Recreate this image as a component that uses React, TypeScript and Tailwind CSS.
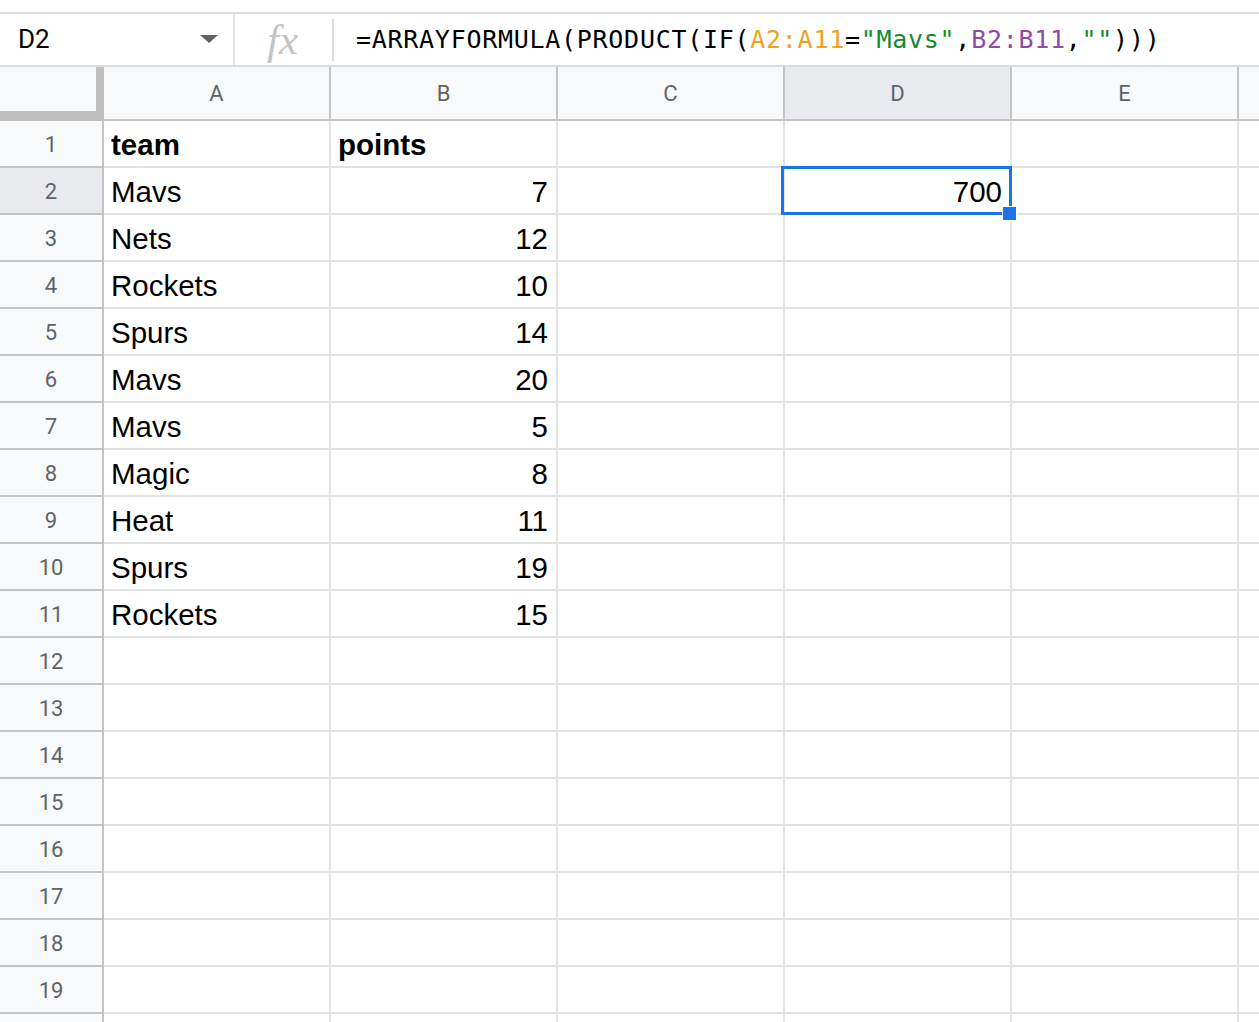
import React from "react";

const COLS = ["A", "B", "C", "D", "E", "F"];

const DATA: Record<number, [string, string]> = {
  1: ["team", "points"],
  2: ["Mavs", "7"],
  3: ["Nets", "12"],
  4: ["Rockets", "10"],
  5: ["Spurs", "14"],
  6: ["Mavs", "20"],
  7: ["Mavs", "5"],
  8: ["Magic", "8"],
  9: ["Heat", "11"],
  10: ["Spurs", "19"],
  11: ["Rockets", "15"],
};

const ROWS = Array.from({ length: 19 }, (_, i) => i + 1);

const cellFont = { fontFamily: '"Liberation Sans", Arial, sans-serif' };
const headFont = { fontFamily: 'Roboto, "Liberation Sans", sans-serif' };

function FormulaBar() {
  return (
    <div className="flex h-[55px] items-center border-y-2 border-[#dadce0] bg-white">
      <div className="flex h-full w-[233px] items-center justify-between pl-[18px] pr-[15px]">
        <span className="text-[26px] text-black" style={headFont}>D2</span>
        <svg width="18" height="9" viewBox="0 0 18 9">
          <path d="M0 0 L18 0 L9 8 Z" fill="#5f6368" />
        </svg>
      </div>
      <div className="h-full w-[2px] bg-[#e3e3e3]" />
      <div className="flex w-[97px] items-center justify-center pr-[2px]">
        <span
          className="text-[43px] italic leading-none text-[#c4c4c4]"
          style={{ fontFamily: '"Liberation Serif", "Times New Roman", serif' }}
        >
          fx
        </span>
      </div>
      <div className="h-[42px] w-[2px] bg-[#dadce0]" />
      <div
        className="pl-[22px] text-[25px] tracking-[0.72px] text-black"
        style={{ fontFamily: '"DejaVu Sans Mono", "Liberation Mono", monospace' }}
      >
        =ARRAYFORMULA(PRODUCT(IF(
        <span className="text-[#f2a11f]">A2:A11</span>=
        <span className="text-[#138a2b]">"Mavs"</span>,
        <span className="text-[#8e4ca6]">B2:B11</span>,
        <span className="text-[#138a2b]">""</span>)))
      </div>
    </div>
  );
}

function HeaderRow() {
  return (
    <div className="flex h-[54px]">
      <div className="h-full w-[104px] shrink-0 border-b-[10px] border-r-[8px] border-[#bfbfbf] bg-[#f8f9fa]" />
      {COLS.map((c) => (
        <div
          key={c}
          className={`flex h-full w-[227px] shrink-0 items-center justify-center border-b-2 border-r-2 border-[#c4c4c4] text-[22px] text-[#5f6368] ${
            c === "D" ? "bg-[#e8eaed]" : "bg-[#f8f9fa]"
          }`}
          style={headFont}
        >
          {c === "F" ? null : c}
        </div>
      ))}
    </div>
  );
}

function Row({ n }: { n: number }) {
  const d = DATA[n];
  return (
    <div className="flex h-[47px]">
      <div
        className={`flex h-full w-[104px] shrink-0 items-center justify-center border-b-2 border-r-2 border-[#c4c4c4] pt-[2px] text-[22px] text-[#5f6368] ${
          n === 2 ? "bg-[#e8eaed]" : "bg-[#f8f9fa]"
        }`}
        style={headFont}
      >
        {n}
      </div>
      {COLS.map((c) => {
        let text = "";
        let right = false;
        if (d && c === "A") text = d[0];
        if (d && c === "B") {
          text = d[1];
          right = n > 1;
        }
        if (n === 2 && c === "D") {
          text = "700";
          right = true;
        }
        return (
          <div
            key={c}
            className={`relative flex h-full w-[227px] shrink-0 items-center border-b-2 border-r-2 border-[#e2e3e3] pl-[7px] pr-[8px] pt-[4px] text-[29.5px] text-black ${
              right ? "justify-end" : "justify-start"
            } ${n === 1 ? "font-bold" : ""}`}
            style={cellFont}
          >
            {text}
            {n === 2 && c === "D" && (
              <>
                <div className="absolute -left-[4px] -top-[2px] z-10 h-[49px] w-[231px] border-[3px] border-[#1a73e8]" />
                <div className="absolute -bottom-[8px] -right-[7px] z-20 h-[15px] w-[15px] border border-white bg-[#1a73e8]" />
              </>
            )}
          </div>
        );
      })}
    </div>
  );
}

export default function App() {
  return (
    <div className="h-[1022px] w-[1259px] overflow-hidden bg-white">
      <div className="h-[12px]" />
      <FormulaBar />
      <HeaderRow />
      {ROWS.map((n) => (
        <Row key={n} n={n} />
      ))}
      <div className="flex h-[47px]">
        <div className="h-full w-[104px] shrink-0 border-r-2 border-[#c4c4c4] bg-[#f8f9fa]" />
        {COLS.map((c) => (
          <div key={c} className="h-full w-[227px] shrink-0 border-r-2 border-[#e2e3e3]" />
        ))}
      </div>
    </div>
  );
}
